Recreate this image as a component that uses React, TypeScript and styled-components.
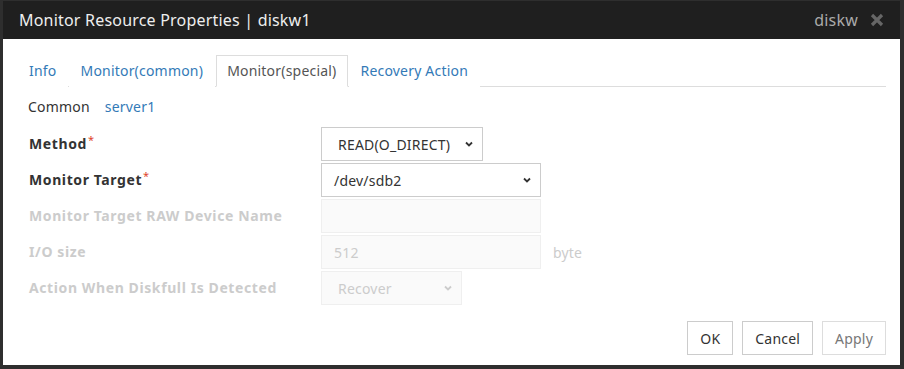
import styled, { createGlobalStyle } from "styled-components";

const GlobalStyle = createGlobalStyle`
  html, body {
    margin: 0;
    padding: 0;
    background: #2e2e2e;
  }
  body {
    font-family: "Noto Sans", "Open Sans", sans-serif;
    font-size: 14px;
    letter-spacing: 0.2px;
    color: #333;
  }
`;

const Page = styled.div`
  width: 904px;
  height: 369px;
  padding: 1px 4px 4px 3px;
  box-sizing: border-box;
  background: #2e2e2e;
`;

const Dialog = styled.div`
  width: 897px;
  height: 364px;
  background: #fff;
  display: flex;
  flex-direction: column;
`;

const TitleBar = styled.div`
  height: 38px;
  background: #1f1f1f;
  display: flex;
  align-items: center;
  padding: 0 16px 0 16px;
  box-sizing: border-box;
`;

const Title = styled.div`
  flex: 1;
  color: #eee;
  font-size: 16px;
`;

const TitleRight = styled.div`
  color: #aaa;
  font-size: 16px;
`;

const CloseIcon = styled.svg`
  margin-left: 12px;
  width: 14px;
  height: 14px;
`;

const Body = styled.div`
  flex: 1;
  padding: 16px 14px 10px 15px;
  display: flex;
  flex-direction: column;
`;

const Tabs = styled.ul`
  list-style: none;
  margin: 0;
  padding: 0;
  display: flex;
  border-bottom: 1px solid #ddd;
  height: 31px;
`;

const Tab = styled.li<{ $active?: boolean }>`
  padding: 0 11px 0 10px;
  margin-right: 1px;
  height: 32px;
  line-height: 30px;
  box-sizing: border-box;
  border: 1px solid ${(p) => (p.$active ? "#ddd" : "transparent")};
  border-bottom-color: ${(p) => (p.$active ? "#fff" : "transparent")};
  background: #fff;
  color: ${(p) => (p.$active ? "#555" : "#337ab7")};
`;

const SubNav = styled.div`
  display: flex;
  gap: 15px;
  padding: 6px 0 0 10px;
  height: 26px;
  align-items: center;
`;

const SubItem = styled.span<{ $link?: boolean }>`
  color: ${(p) => (p.$link ? "#337ab7" : "#333")};
`;

const Form = styled.div`
  margin-top: 8px;
  display: flex;
  flex-direction: column;
  gap: 2px;
`;

const Row = styled.div`
  display: flex;
  align-items: center;
  height: 34px;
  padding-left: 11px;
`;

const Label = styled.div<{ $disabled?: boolean }>`
  width: 292px;
  flex-shrink: 0;
  font-weight: bold;
  letter-spacing: 0.6px;
  color: ${(p) => (p.$disabled ? "#ccc" : "#333")};
  margin-top: -1px;
`;

const Req = styled.span`
  color: #e0452b;
  font-size: 11px;
  font-weight: normal;
  line-height: 0;
  vertical-align: 5px;
  margin-left: 1px;
`;

const Control = styled.div<{ $width: number; $disabled?: boolean; $pad?: number }>`
  width: ${(p) => p.$width}px;
  height: 34px;
  box-sizing: border-box;
  border: 1px solid ${(p) => (p.$disabled ? "#efefef" : "#ccc")};
  background: ${(p) => (p.$disabled ? "#fafafa" : "#fff")};
  color: ${(p) => (p.$disabled ? "#ccc" : "#333")};
  display: flex;
  align-items: center;
  justify-content: space-between;
  padding: 0 9px 0 ${(p) => p.$pad ?? 12}px;
`;

const Unit = styled.span`
  color: #ccc;
  margin-left: 12px;
`;

const Footer = styled.div`
  margin-top: auto;
  display: flex;
  justify-content: flex-end;
  gap: 9px;
`;

const Button = styled.button<{ $disabled?: boolean }>`
  font-family: inherit;
  font-size: 14px;
  letter-spacing: 0.2px;
  height: 34px;
  padding: 0 12px;
  background: #fff;
  border: 1px solid ${(p) => (p.$disabled ? "#ddd" : "#ccc")};
  color: ${(p) => (p.$disabled ? "#777" : "#333")};
  border-radius: 0;
`;

function Chevron({ color }: { color: string }) {
  return (
    <svg width="8" height="6" viewBox="0 0 8 6">
      <path d="M1 1.5 L4 4.5 L7 1.5" fill="none" stroke={color} strokeWidth="1.8" />
    </svg>
  );
}

export default function App() {
  return (
    <>
      <GlobalStyle />
      <Page>
        <Dialog>
          <TitleBar>
            <Title>Monitor Resource Properties | diskw1</Title>
            <TitleRight>diskw</TitleRight>
            <CloseIcon viewBox="0 0 14 14">
              <path d="M2 2 L12 12 M12 2 L2 12" stroke="#666" strokeWidth="3.2" />
            </CloseIcon>
          </TitleBar>
          <Body>
            <Tabs>
              <Tab>Info</Tab>
              <Tab>Monitor(common)</Tab>
              <Tab $active>Monitor(special)</Tab>
              <Tab>Recovery Action</Tab>
            </Tabs>
            <SubNav>
              <SubItem>Common</SubItem>
              <SubItem $link>server1</SubItem>
            </SubNav>
            <Form>
              <Row>
                <Label>
                  Method<Req>*</Req>
                </Label>
                <Control $width={162} $pad={16}>
                  READ(O_DIRECT)
                  <Chevron color="#333" />
                </Control>
              </Row>
              <Row>
                <Label>
                  Monitor Target<Req>*</Req>
                </Label>
                <Control $width={220}>
                  /dev/sdb2
                  <Chevron color="#333" />
                </Control>
              </Row>
              <Row>
                <Label $disabled>Monitor Target RAW Device Name</Label>
                <Control $width={220} $disabled />
              </Row>
              <Row>
                <Label $disabled>I/O size</Label>
                <Control $width={220} $disabled>
                  512
                </Control>
                <Unit>byte</Unit>
              </Row>
              <Row>
                <Label $disabled>Action When Diskfull Is Detected</Label>
                <Control $width={141} $disabled $pad={16}>
                  Recover
                  <Chevron color="#ccc" />
                </Control>
              </Row>
            </Form>
            <Footer>
              <Button>OK</Button>
              <Button>Cancel</Button>
              <Button $disabled>Apply</Button>
            </Footer>
          </Body>
        </Dialog>
      </Page>
    </>
  );
}
